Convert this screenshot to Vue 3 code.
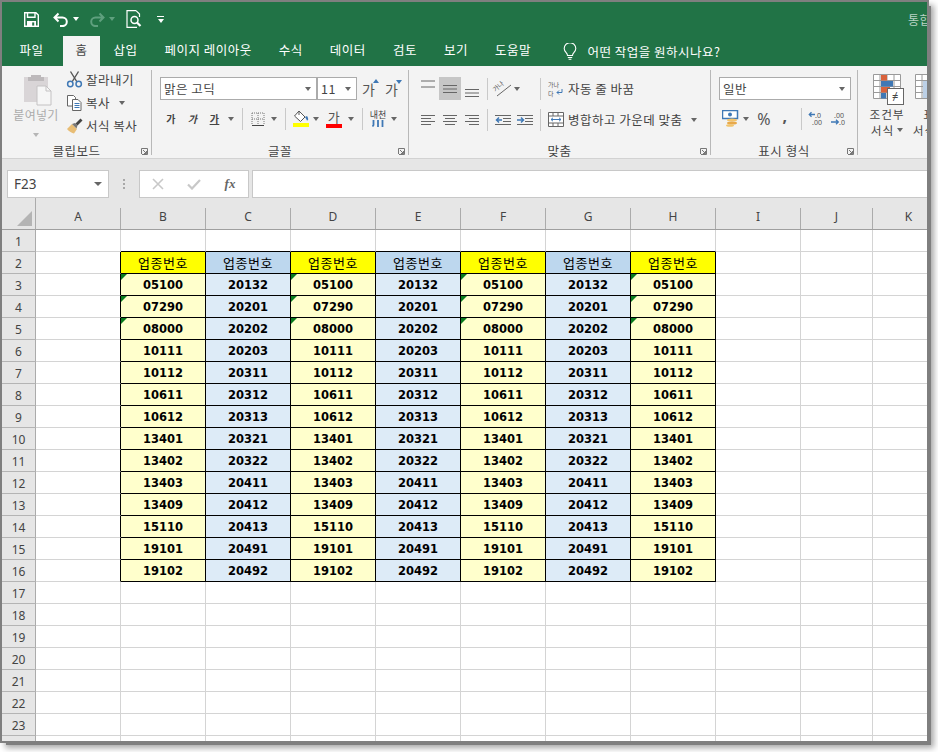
<script setup>
const tabs = ['파일', '홈', '삽입', '페이지 레이아웃', '수식', '데이터', '검토', '보기', '도움말']
const cols = [
  { n: 'A', c: 'wide' }, { n: 'B', c: 'wide' }, { n: 'C', c: 'wide' }, { n: 'D', c: 'wide' },
  { n: 'E', c: 'wide' }, { n: 'F', c: 'wide' }, { n: 'G', c: 'wide' }, { n: 'H', c: 'wide' },
  { n: 'I', c: 'wide' }, { n: 'J', c: 'narrow' }, { n: 'K', c: 'narrow' }
]
const yellowCol = ['05100','07290','08000','10111','10112','10611','10612','13401','13402','13403','13409','15110','19101','19102']
const blueCol = ['20132','20201','20202','20203','20311','20312','20313','20321','20322','20411','20412','20413','20491','20492']
const rows = Array.from({ length: 24 }, (_, i) => i + 1)

function inTable(r, c) { return r >= 2 && r <= 16 && c >= 1 && c <= 7 }
function isYellow(c) { return c % 2 === 1 }
function cellClass(r, c) {
  const list = []
  if ((r >= 2 && r <= 16 && c >= 0 && c <= 7)) list.push('br-k')
  if (r >= 1 && r <= 16 && c >= 1 && c <= 7) list.push('bb-k')
  if (inTable(r, c)) {
    if (r === 2) list.push(isYellow(c) ? 'h-y' : 'h-b', 'head')
    else list.push(isYellow(c) ? 'd-y' : 'd-b', 'data')
    if (r >= 3 && r <= 5 && isYellow(c)) list.push('flag')
  }
  return list
}
function cellText(r, c) {
  if (!inTable(r, c)) return ''
  if (r === 2) return '업종번호'
  return (isYellow(c) ? yellowCol : blueCol)[r - 3]
}
</script>

<template>
  <div class="page">
    <div class="win">
      <header class="title">
        <div class="qat">
          <svg class="q-save" width="15" height="15" viewBox="0 0 15 15"><path d="M.7.7h11.2l2.400 2.400v11.200H.7z" fill="none" stroke="#fff" stroke-width="1.400"/><path d="M3.500 1v4.200h7.500V1" fill="none" stroke="#fff" stroke-width="1.400"/><path d="M3 14V9h9v5" fill="#fff"/><rect x="8.200" y="10.400" width="2" height="3.200" fill="#217346"/></svg>
          <svg class="q-undo" width="16" height="15" viewBox="0 0 16 15"><path d="M5.500 1.500L1.500 5.500l4 4M2 5.500h7.500a4.300 4.300 0 0 1 0 8.600H7" fill="none" stroke="#fff" stroke-width="2"/></svg>
          <i class="caret white q-c1"></i>
          <svg class="q-redo" width="16" height="15" viewBox="0 0 16 15"><path d="M10.500 1.500l4 4-4 4M14 5.500H6.500a4.300 4.300 0 0 0 0 8.600H9" fill="none" stroke="#5fa07e" stroke-width="2"/></svg>
          <i class="caret dim q-c2"></i>
          <svg class="q-prev" width="16" height="18" viewBox="0 0 16 18"><path d="M10 .6H1v16.800h10M10 .6l3.500 3.500v3" fill="none" stroke="#fff" stroke-width="1.200"/><circle cx="8.500" cy="10" r="3.500" fill="none" stroke="#fff" stroke-width="1.500"/><path d="M11 12.500l3.500 3.500" stroke="#fff" stroke-width="2.200"/></svg>
          <span class="q-more"><b></b><i class="caret white"></i></span>
        </div>
        <span class="doc">통합</span>
      </header>

      <nav class="tabs">
        <span v-for="t in tabs" :key="t" class="tab" :class="{ active: t === '홈', file: t === '파일' }">{{ t }}</span>
        <svg class="bulb" width="14" height="17" viewBox="0 0 14 17"><path d="M4.500 12.500C4.500 9.800 1.200 8.800 1.200 5.500a5.800 5.800 0 0 1 11.600 0c0 3.300-3.300 4.300-3.300 7z M4.800 14.500h4.400M5.600 16.300h2.800" fill="none" stroke="#fff" stroke-width="1.100"/></svg>
        <span class="tell">어떤 작업을 원하시나요?</span>
      </nav>

      <section class="ribbon">
        <div class="group g-clip">
          <div class="clip-body">
            <div class="paste">
              <svg width="30" height="32" viewBox="0 0 30 32"><path d="M1 3h24v25H1z" fill="#d9d5d7"/><path d="M8 3V1h10v2h3v4H5V3z" fill="#bdb9bb"/><path d="M14 12h9l5 5v14H14z" fill="#f6f6f6" stroke="#c4c2c3"/><path d="M23 12v5h5" fill="none" stroke="#c4c2c3"/></svg>
              <span>붙여넣기</span>
              <i class="caret faint"></i>
            </div>
            <div class="clip-list">
              <div class="clip-row">
                <svg width="16" height="17" viewBox="0 0 16 17"><path d="M4 .5l6.500 10.500M12 .5L5.500 11" stroke="#555" stroke-width="1.400" fill="none"/><circle cx="3.800" cy="13" r="2.700" fill="none" stroke="#3f78b5" stroke-width="1.500"/><circle cx="12.200" cy="13" r="2.700" fill="none" stroke="#3f78b5" stroke-width="1.500"/></svg>
                <span>잘라내기</span>
              </div>
              <div class="clip-row">
                <svg width="16" height="16" viewBox="0 0 16 16"><path d="M1 .5h6l2 2V11H1z" fill="#fff" stroke="#666"/><path d="M6 4.500h5.500l3 3v8H6z" fill="#fff" stroke="#666"/><path d="M8 8.500h5M8 10.500h5M8 12.500h5" stroke="#3f78b5"/></svg>
                <span>복사</span><i class="caret copy-c"></i>
              </div>
              <div class="clip-row">
                <svg width="17" height="16" viewBox="0 0 17 16"><path d="M1 11l5-5 5 5-3 4.500c-2-.5-5-2-7-4.500z" fill="#e8bd75"/><path d="M6 6l3-1 2.500 2.500-1 3z" fill="#777"/><path d="M9.500 5.500l5-5 2 2-5 5z" fill="#444"/></svg>
                <span>서식 복사</span>
              </div>
            </div>
          </div>
          <div class="glabel">클립보드<svg class="launch" width="7" height="7" viewBox="0 0 7 7"><path d="M.5 6V.5H6.500v6H1M2 2l3.500 3.500M5.500 3v2.500H3" fill="none" stroke="#777"/></svg></div>
        </div>

        <div class="group g-font">
          <div class="selects">
            <div class="sel sel-font"><span>맑은 고딕</span><i class="caret"></i></div>
            <div class="sel sel-size"><span>11</span><i class="caret"></i></div>
            <span class="grow g1">가<em class="up"></em></span>
            <span class="grow g2">가<em class="down"></em></span>
          </div>
          <div class="tools font-tools">
            <b class="ga">가</b>
            <b class="ga it">가</b>
            <b class="ga ul">가</b>
            <i class="caret"></i>
            <s class="sep"></s>
            <svg width="14" height="14" viewBox="0 0 14 14"><path d="M1 1h12v12M1 1v12M7 1v12M1 7h12" fill="none" stroke="#777" stroke-dasharray="1 1"/><path d="M1 13.500h12" stroke="#444"/></svg>
            <i class="caret"></i>
            <s class="sep"></s>
            <span class="fill"><svg width="16" height="13" viewBox="0 0 16 13"><path d="M6 1l6 6-4.500 4.500L1.500 6z" fill="#fff" stroke="#555"/><path d="M6 5V1" stroke="#555"/><path d="M12 7l2-1c1 1.500 1.500 3 1 4-.5.700-1.500.5-1.500-.5z" fill="#3f78b5"/></svg><u></u></span>
            <i class="caret"></i>
            <span class="fcolor">가<u></u></span>
            <i class="caret"></i>
            <s class="sep"></s>
            <span class="phon"><small>내천</small><svg width="12" height="7" viewBox="0 0 12 7"><path d="M1.500 0v5l-1 1.500M6 0v7M10.500 0v7" stroke="#3f78b5" stroke-width="1.800" fill="none"/></svg></span>
            <i class="caret"></i>
          </div>
          <div class="glabel">글꼴<svg class="launch" width="7" height="7" viewBox="0 0 7 7"><path d="M.5 6V.5H6.500v6H1M2 2l3.500 3.500M5.500 3v2.500H3" fill="none" stroke="#777"/></svg></div>
        </div>

        <div class="group g-align">
          <div class="tools al-1">
            <svg class="higher" width="14" height="10" viewBox="0 0 14 10"><path d="M0 2h14M0 8h14" stroke="#666" /></svg>
            <span class="on"><svg width="14" height="10" viewBox="0 0 14 10"><path d="M0 1.500h14M0 5h14M0 8.500h14" stroke="#666"/></svg></span>
            <svg class="lower" width="14" height="10" viewBox="0 0 14 10"><path d="M0 1.500h14M0 5h14M0 8.500h14" stroke="#666"/></svg>
            <s class="sep"></s>
            <svg class="tiny" width="18" height="17" viewBox="0 0 18 17"><text x="0" y="9" font-size="6.500" fill="#555" transform="rotate(-40 5 9)" font-family="Noto Sans CJK KR">가나</text><path d="M3 16L17 5" stroke="#666"/></svg>
            <i class="caret start"></i>
            <s class="sep"></s>
            <svg class="tiny" width="16" height="15" viewBox="0 0 16 15"><text x="0" y="6" font-size="6" fill="#555" font-family="Noto Sans CJK KR">가나</text><text x="0" y="14.700" font-size="6" fill="#555" font-family="Noto Sans CJK KR">다</text><path d="M14 8v3.500H9m2-2l-2 2 2 2" fill="none" stroke="#3f78b5"/></svg>
            <span class="tl">자동 줄 바꿈</span>
          </div>
          <div class="tools al-2">
            <svg width="14" height="10" viewBox="0 0 14 10"><path d="M0 .5h14M0 3.500h10M0 6.500h14M0 9.500h10" stroke="#666"/></svg>
            <svg width="14" height="10" viewBox="0 0 14 10"><path d="M0 .5h14M2 3.500h10M0 6.500h14M2 9.500h10" stroke="#666"/></svg>
            <svg width="14" height="10" viewBox="0 0 14 10"><path d="M0 .5h14M4 3.500h10M0 6.500h14M4 9.500h10" stroke="#666"/></svg>
            <s class="sep"></s>
            <svg width="16" height="10" viewBox="0 0 16 10"><path d="M0 .5h16M8 3.500h8M8 6.500h8M0 9.500h16" stroke="#666"/><path d="M7 5H1.500M4 2.500L1.500 5 4 7.500" fill="none" stroke="#3f78b5" stroke-width="1.500"/></svg>
            <svg width="16" height="10" viewBox="0 0 16 10"><path d="M0 .5h16M8 3.500h8M8 6.500h8M0 9.500h16" stroke="#666"/><path d="M0 5h6M4 2.500L6.500 5 4 7.500" fill="none" stroke="#3f78b5" stroke-width="1.500"/></svg>
            <s class="sep"></s>
            <svg class="end" width="16" height="15" viewBox="0 0 16 15"><path d="M.5.5h15v14H.5zM.5 4h15M.5 11h15M5 .5V4M10 .5V4M5 11v3.500M10 11v3.500" fill="#fff" stroke="#666"/><path d="M3 7.500h10M5 5.800L3 7.500l2 1.700M11 5.800l2 1.700-2 1.700" fill="none" stroke="#3f78b5"/></svg>
            <span class="tl">병합하고 가운데 맞춤</span>
            <i class="caret merge-c"></i>
          </div>
          <div class="glabel">맞춤<svg class="launch" width="7" height="7" viewBox="0 0 7 7"><path d="M.5 6V.5H6.500v6H1M2 2l3.500 3.500M5.500 3v2.500H3" fill="none" stroke="#777"/></svg></div>
        </div>

        <div class="group g-num">
          <div class="selects"><div class="sel sel-num"><span>일반</span><i class="caret"></i></div></div>
          <div class="tools num-tools">
            <svg width="17" height="17" viewBox="0 0 17 17"><rect x="0.500" y=".5" width="15" height="8" fill="#fff" stroke="#3f78b5" stroke-width="1.500"/><circle cx="8" cy="4.500" r="2" fill="#3f78b5"/><ellipse cx="10" cy="10" rx="5" ry="1.500" fill="#f2c46d"/><ellipse cx="10" cy="13" rx="5" ry="1.500" fill="#e8a94a"/><ellipse cx="8" cy="15.500" rx="4" ry="1.300" fill="#f2c46d"/></svg>
            <i class="caret"></i>
            <span class="pct">%</span>
            <b class="comma">,</b>
            <s class="sep"></s>
            <svg class="tiny" width="16" height="15" viewBox="0 0 16 15"><text x="6" y="6.500" font-size="7" fill="#555" font-family="Noto Sans">.0</text><text x="3" y="14" font-size="7" fill="#555" font-family="Noto Sans">.00</text><path d="M6 3.500H0M2.500 1.300L.3 3.500l2.200 2.200" fill="none" stroke="#3f78b5" stroke-width="1.300"/></svg>
            <svg class="tiny" width="16" height="15" viewBox="0 0 16 15"><text x="3" y="6.500" font-size="7" fill="#555" font-family="Noto Sans">.00</text><text x="8" y="14" font-size="7" fill="#555" font-family="Noto Sans">.0</text><path d="M0 11h7M5 8.800L7.300 11 5 13.200" fill="none" stroke="#3f78b5" stroke-width="1.300"/></svg>
          </div>
          <div class="glabel">표시 형식<svg class="launch" width="7" height="7" viewBox="0 0 7 7"><path d="M.5 6V.5H6.500v6H1M2 2l3.500 3.500M5.500 3v2.500H3" fill="none" stroke="#777"/></svg></div>
        </div>

        <div class="g-style">
          <div class="big">
            <svg width="31" height="31" viewBox="0 0 31 31"><path d="M.5.5h27v24H.5zM.5 6.500h27M.5 12.500h27M.5 18.500h27M7 .5v24M14 .5v24M21 .500v24" fill="#fff" stroke="#9a9a9a"/><rect x="8" y="1" width="6" height="5.500" fill="#d9623c"/><rect x="8" y="7" width="12" height="5.500" fill="#3f78b5"/><rect x="8" y="13" width="9" height="5.500" fill="#d9623c"/><rect x="8" y="19" width="5" height="5.500" fill="#3f78b5"/><rect x="14.500" y="14.500" width="16" height="16" fill="#fff" stroke="#666"/><text x="22.500" y="26" text-anchor="middle" font-size="11" fill="#444" font-family="Noto Sans">≠</text></svg>
            <span>조건부</span>
            <span class="with-c">서식<i class="caret"></i></span>
          </div>
          <div class="big">
            <svg width="31" height="31" viewBox="0 0 31 31"><path d="M.5.5h27v24H.5zM.5 6.500h27M.5 12.500h27M.5 18.500h27M7 .5v24M14 .5v24" fill="#fff" stroke="#9a9a9a"/><rect x="8" y="7" width="19" height="17" fill="#bcd0e6"/></svg>
            <span>표</span>
            <span class="with-c">서식<i class="caret"></i></span>
          </div>
        </div>
      </section>

      <section class="fbar">
        <div class="namebox"><span>F23</span><i class="caret big-c"></i></div>
        <div class="grip"><b></b><b></b><b></b></div>
        <div class="fxbox">
          <svg width="12" height="12" viewBox="0 0 12 12"><path d="M1 1l10 10M11 1L1 11" stroke="#c8c8c8" stroke-width="1.600"/></svg>
          <svg width="14" height="11" viewBox="0 0 14 11"><path d="M1 5.500l4 4 8-8.500" fill="none" stroke="#c8c8c8" stroke-width="2.200"/></svg>
          <span class="fx">fx</span>
        </div>
        <div class="finput"></div>
      </section>

      <section class="sheet">
        <div class="corner"><svg width="15" height="15" viewBox="0 0 15 15"><path d="M15 0v15H0z" fill="#b4b4b4"/></svg></div>
        <div v-for="c in cols" :key="c.n" class="chead"><span>{{ c.n }}</span></div>
        <template v-for="r in rows" :key="r">
          <div class="rhead">{{ r }}</div>
          <div v-for="(c, i) in cols" :key="c.n" class="cell" :class="cellClass(r, i)">{{ cellText(r, i) }}</div>
        </template>
      </section>
    </div>
  </div>
</template>

<style>
html, body { margin: 0; background: #fff; }
</style>

<style scoped>
.page { width: 938px; height: 752px; overflow: hidden; background: #fff; }
.win {
  width: 925px; height: 739px; margin: 2px 0 0 2px; overflow: hidden;
  background: #fff; color: #444;
  font-family: "Noto Sans CJK KR", "Noto Sans", sans-serif;
  font-size: 12.5px; letter-spacing: .5px;
  box-shadow: 0 0 0 2px #7f7f7f, 4px 4px 0 0 #7f7f7f, 5px 5px 6px 2px rgba(0,0,0,.35);
}
i, s, em, u { text-decoration: none; font-style: normal; display: block; }
.caret { width: 0; height: 0; border: 3.500px solid transparent; border-top: 4px solid #666; border-bottom: 0; }
.caret.white { border-top-color: #fff; }
.caret.dim { border-top-color: #5fa07e; }
.caret.faint { border-top-color: #b5b5b5; }
.tiny { overflow: visible; letter-spacing: 0; }

.title { height: 34px; background: #217346; display: flex; align-items: center; overflow: hidden; }
.qat { width: 906px; flex: none; display: flex; align-items: center; padding-left: 22px; box-sizing: border-box; }
.q-undo { margin-left: 14px; }
.q-c1 { margin-left: 4px; }
.q-redo { margin-left: 10px; }
.q-c2 { margin-left: 4px; }
.q-prev { margin-left: 11px; }
.q-more { margin-left: 15px; display: flex; flex-direction: column; align-items: center; gap: 2px; }
.q-more b { display: block; width: 7px; height: 1px; background: #fff; }
.doc { color: #b9d3c5; font-size: 12px; white-space: nowrap; }

.tabs { height: 30px; background: #217346; display: flex; align-items: center; color: #fff; }
.tab { padding: 0 13.500px; height: 30px; line-height: 28px; white-space: nowrap; box-sizing: border-box; }
.tab.file { margin-left: 4px; margin-right: 6px; }
.tab.active { background: #f3f3f3; color: #444; width: 37px; padding: 0; text-align: center; margin-right: 0; }
.bulb { margin-left: 19px; }
.tell { margin-left: 10px; white-space: nowrap; }

.ribbon { height: 93px; box-sizing: border-box; background: #f3f3f3; border-bottom: 1px solid #d2d2d2; display: flex; align-items: flex-start; padding-top: 4px; }
.group { height: 85px; box-sizing: border-box; border-right: 1px solid #b8b8b8; display: flex; flex-direction: column; flex: none; position: relative; }
.g-clip { width: 150px; }
.g-font { width: 257px; padding-left: 8px; }
.g-align { width: 302px; padding-left: 8px; }
.g-num { width: 147px; padding-left: 8px; }
.glabel { position: absolute; left: 0; right: 0; bottom: -5px; height: 18px; line-height: 18px; text-align: center; white-space: nowrap; }
.launch { position: absolute; right: 3px; bottom: 5px; }

.clip-body { display: flex; }
.paste { width: 50px; margin-left: 9px; padding-top: 4px; display: flex; flex-direction: column; align-items: center; color: #ababab; font-size: 12px; letter-spacing: .3px; white-space: nowrap; }
.paste svg { margin-left: 4px; }
.paste span { margin-top: 0; line-height: 18px; }
.paste .caret { margin-top: 9px; }
.clip-list { margin-left: 5px; margin-top: -2px; }
.clip-row { height: 23px; display: flex; align-items: center; gap: 3px; white-space: nowrap; }
.clip-row svg { width: 17px; }
.copy-c { margin-left: 6px; }

.selects { display: flex; align-items: center; padding-top: 7px; height: 23px; }
.sel { height: 23px; box-sizing: border-box; border: 1px solid #ababab; background: #fff; display: flex; align-items: center; justify-content: space-between; padding: 0 5px 0 3px; }
.sel span { line-height: 20px; }
.sel-font { width: 157px; }
.sel-size { width: 40px; padding-left: 3px; }
.sel-num { width: 132px; }
.grow { position: relative; font-size: 14px; width: 16px; color: #555; line-height: 22px; }
.g1 { margin-left: 5px; }
.g2 { margin-left: 7px; }
.up, .down { position: absolute; right: -1px; width: 0; height: 0; border: 3px solid transparent; }
.up { top: 1px; border-bottom: 4px solid #3f78b5; border-top: 0; }
.down { top: 2px; border-top: 4px solid #3f78b5; border-bottom: 0; }

.tools { display: grid; align-items: center; justify-items: center; height: 23px; }
.sep { width: 1px; height: 22px; background: #c9c9c9; }
.font-tools { margin-top: 7px; grid-template-columns: 22px 21px 23px 10px 12px 20px 11px 12px 20px 10px 26px 8px 14px 18px 14px; }
.ga { font-size: 10px; line-height: 14px; font-weight: 700; color: #444; }
.ga.it { font-style: italic; }
.ga.ul { text-decoration: underline; }
.fill { display: flex; flex-direction: column; align-items: center; }
.fill u { width: 16px; height: 4px; background: #ffff00; margin-top: 0; }
.fcolor { display: flex; flex-direction: column; align-items: center; font-size: 13px; line-height: 15px; color: #555; }
.fcolor u { width: 16px; height: 4px; background: #f00; }
.phon { display: flex; flex-direction: column; align-items: center; line-height: 10px; }
.phon small { font-size: 9px; letter-spacing: 0; }

.al-1 { margin-top: 7px; grid-template-columns: 22px 22px 22px 8px 23px 18px 16px 16px auto; justify-content: start; }
.al-2 { margin-top: 8px; grid-template-columns: 22px 22px 22px 8px 23px 22px 8px 20px auto auto; justify-content: start; }
.al-1 .sep, .al-2 .sep { height: 22px; }
.on { width: 22px; height: 23px; background: #c6c6c6; display: flex; align-items: center; justify-content: center; }
.higher { margin-bottom: 10px; }
.lower { margin-top: 9px; }
.start { justify-self: start; }
.end { justify-self: end; }
.tl { margin-left: 4px; white-space: nowrap; }
.merge-c { margin-left: 8px; }

.num-tools { margin-top: 7px; grid-template-columns: 22px 10px 26px 16px 16px 16px 28px; justify-content: start; }
.pct { font-size: 16px; color: #555; font-family: "Noto Sans", sans-serif; letter-spacing: 0; }
.comma { font-size: 16px; line-height: 14px; color: #555; font-family: "Noto Sans", sans-serif; margin-bottom: 6px; }

.g-style { display: flex; padding-left: 9px; flex: none; }
.big { width: 40px; flex: none; margin-right: 2px; display: flex; flex-direction: column; align-items: center; white-space: nowrap; font-size: 11.700px; letter-spacing: .9px; }
.big svg { margin-top: 4px; margin-left: 3px; }
.big span { line-height: 17px; }
.big span:nth-of-type(1) { margin-top: 0; }
.with-c { display: flex; align-items: center; gap: 3px; margin-top: -1px; }

.fbar { height: 39px; box-sizing: border-box; padding: 11px 0 0 5px; background: #e6e6e6; display: flex; align-items: stretch; }
.namebox { width: 102px; box-sizing: border-box; border: 1px solid #c8c8c8; background: #fff; display: flex; align-items: center; justify-content: space-between; padding: 0 6px; font-family: "Noto Sans", sans-serif; font-size: 13.500px; letter-spacing: 0; }
.big-c { border-width: 4px; border-top-width: 4px; border-bottom: 0; }
.grip { width: 30px; display: flex; flex-direction: column; align-items: center; justify-content: center; gap: 2px; }
.grip b { width: 2px; height: 2px; background: #a8a8a8; display: block; }
.fxbox { width: 110px; box-sizing: border-box; border: 1px solid #c8c8c8; background: #fff; display: grid; grid-template-columns: 36px 36px 36px; align-items: center; justify-items: center; }
.fx { font-family: "Liberation Serif", serif; font-style: italic; font-weight: 700; font-size: 13px; color: #666; letter-spacing: 0; }
.finput { flex: 1; margin-left: 3px; border: 1px solid #c8c8c8; border-right: 0; background: #fff; }

.sheet { display: grid; grid-template-columns: 34px repeat(9, 85px) 72px 72px; grid-auto-rows: 22px; grid-template-rows: 32px; width: 1100px; }
.corner { background: #e6e6e6; border-right: 1px solid #ababab; border-bottom: 1px solid #9f9f9f; box-sizing: border-box; display: flex; align-items: flex-end; justify-content: flex-end; padding: 0 3px 3px 0; }
.chead { background: #e6e6e6; border-bottom: 1px solid #9f9f9f; box-sizing: border-box; display: flex; align-items: flex-end; font-family: "Noto Sans", sans-serif; font-size: 12px; letter-spacing: 0; color: #444; }
.chead span { flex: 1; height: 21px; line-height: 17px; text-align: center; border-right: 1px solid #ababab; }
.rhead { background: #e6e6e6; border-right: 1px solid #ababab; border-bottom: 1px solid #b4b4b4; box-sizing: border-box; text-align: center; line-height: 23px; font-family: "Noto Sans", sans-serif; font-size: 12px; letter-spacing: 0; color: #444; }
.cell { box-sizing: border-box; border-right: 1px solid #d4d4d4; border-bottom: 1px solid #d4d4d4; text-align: center; line-height: 21px; color: #000; position: relative; }
.br-k { border-right-color: #000; }
.bb-k { border-bottom-color: #000; }
.h-y { background: #ffff00; }
.h-b { background: #bdd7ee; }
.d-y { background: #ffffcc; }
.d-b { background: #ddebf7; }
.head { font-size: 13px; letter-spacing: .6px; line-height: 21px; }
.data { font-family: "DejaVu Sans", sans-serif; font-size: 11.500px; font-weight: 700; letter-spacing: 0; line-height: 23px; }
.flag::before { content: ""; position: absolute; left: 0; top: 0; border-top: 6px solid #0a7d1e; border-right: 6px solid transparent; }
</style>
